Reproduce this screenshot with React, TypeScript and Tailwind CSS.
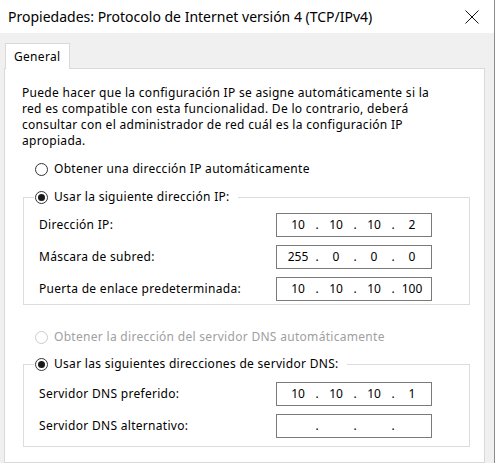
import React from "react";

const font = { fontFamily: '"Noto Sans", "Open Sans", sans-serif' };

function Radio({ checked, disabled }: { checked?: boolean; disabled?: boolean }) {
  return (
    <span
      className={
        "flex h-[13px] w-[13px] shrink-0 items-center justify-center rounded-full border bg-white " +
        (disabled ? "border-[#cccccc]" : "border-[#333333]")
      }
    >
      {checked && <span className="h-[7px] w-[7px] rounded-full bg-[#1a1a1a]" />}
    </span>
  );
}

function RadioRow({
  label,
  checked,
  disabled,
}: {
  label: string;
  checked?: boolean;
  disabled?: boolean;
}) {
  return (
    <div className="flex h-[16px] items-center gap-[6px]">
      <Radio checked={checked} disabled={disabled} />
      <span className={disabled ? "text-[#a0a0a0]" : "text-black"}>{label}</span>
    </div>
  );
}

function IpBox({ parts }: { parts: string[] }) {
  return (
    <div className="flex h-[24px] w-[156px] items-center border border-[#7a7a7a] bg-white pl-[6px] tracking-normal">
      {parts.map((p, i) => (
        <React.Fragment key={i}>
          <span className="w-[30px] text-center">{p}</span>
          {i < 3 && <span className="w-[8px] text-center">.</span>}
        </React.Fragment>
      ))}
    </div>
  );
}

function FieldRow({ label, parts }: { label: string; parts: string[] }) {
  return (
    <div className="flex items-center justify-between">
      <span>{label}</span>
      <IpBox parts={parts} />
    </div>
  );
}

export default function App() {
  return (
    <div
      className="flex h-[463px] w-[497px] overflow-hidden bg-white text-[12px] leading-[16px] text-black"
      style={font}
    >
      <div className="flex w-[495px] shrink-0 flex-col border-r border-[#8c8c8c]">
        {/* title bar */}
        <div className="flex h-[33px] shrink-0 items-center justify-between bg-white pl-[8px] pr-[15px]">
          <span className="text-[14px] leading-[20px]">
            Propiedades: Protocolo de Internet versión 4 (TCP/IPv4)
          </span>
          <svg width="14" height="14" viewBox="0 0 14 14">
            <path d="M0.5 0.5 L13.5 13.5 M13.5 0.5 L0.5 13.5" stroke="#111" strokeWidth="1" />
          </svg>
        </div>

        <div className="flex flex-1 flex-col bg-[#f0f0f0] pl-[4px] pr-[9px] pt-[10px] tracking-[0.3px]">
          {/* tab */}
          <div className="flex">
            <div className="relative z-10 -mb-px ml-[1px] flex h-[26px] w-[65px] items-center border border-b-0 border-[#d9d9d9] bg-white pl-[8px]">
              General
            </div>
          </div>

          {/* panel */}
          <div className="flex-1 border border-[#d9d9d9] bg-white pl-[17px] pr-[14px] pt-[16px]">
            <p className="whitespace-nowrap">
              Puede hacer que la configuración IP se asigne automáticamente si la
              <br />
              red es compatible con esta funcionalidad. De lo contrario, deberá
              <br />
              consultar con el administrador de red cuál es la configuración IP
              <br />
              apropiada.
            </p>

            <div className="ml-[13px] mt-[12px]">
              <RadioRow label="Obtener una dirección IP automáticamente" />
            </div>

            <fieldset className="ml-[1px] mt-[12px] border border-[#dcdcdc]">
              <legend className="ml-[10px] flex items-center pl-[1px] pr-[8px]">
                <RadioRow label="Usar la siguiente dirección IP:" checked />
              </legend>
              <div className="flex flex-col gap-[8px] pb-[3px] pl-[15px] pr-[37px] pt-[8px]">
                <FieldRow label="Dirección IP:" parts={["10", "10", "10", "2"]} />
                <FieldRow label="Máscara de subred:" parts={["255", "0", "0", "0"]} />
                <FieldRow
                  label="Puerta de enlace predeterminada:"
                  parts={["10", "10", "10", "100"]}
                />
              </div>
            </fieldset>

            <div className="ml-[13px] mt-[24px]">
              <RadioRow label="Obtener la dirección del servidor DNS automáticamente" disabled />
            </div>

            <fieldset className="ml-[1px] mt-[11px] border border-[#dcdcdc]">
              <legend className="ml-[10px] flex items-center pl-[1px] pr-[8px]">
                <RadioRow label="Usar las siguientes direcciones de servidor DNS:" checked />
              </legend>
              <div className="flex flex-col gap-[8px] pb-[8px] pl-[15px] pr-[37px] pt-[10px]">
                <FieldRow label="Servidor DNS preferido:" parts={["10", "10", "10", "1"]} />
                <FieldRow label="Servidor DNS alternativo:" parts={["", "", "", ""]} />
              </div>
            </fieldset>
          </div>
        </div>
      </div>
    </div>
  );
}
